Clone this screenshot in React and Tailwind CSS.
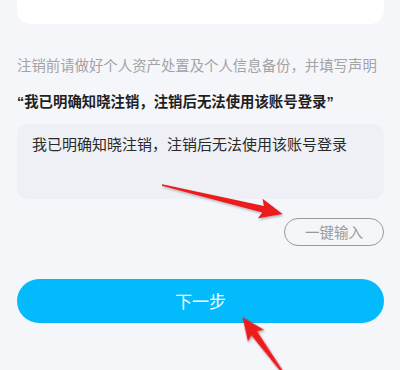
export default function App() {
  const arrow = (L) =>
    `0,-0.8 ${L - 20},-3.4 ${L - 23},-10 ${L},0 ${L - 23},10 ${L - 20},3.4 0,0.8`;
  return (
    <div
      className="relative w-[400px] h-[370px] overflow-hidden bg-[#f5f6fa] pl-[17px] pr-[16px]"
      style={{ fontFamily: '"Noto Sans CJK SC", "Noto Sans", sans-serif' }}
    >
      <div className="h-[24px] rounded-b-[14px] bg-white" />
      <p className="mt-[31px] text-[14.4px] leading-[20px] text-[#a3a3a6] whitespace-nowrap">
        注销前请做好个人资产处置及个人信息备份，并填写声明
      </p>
      <p className="mt-[16px] text-[14.4px] leading-[20px] font-bold text-[#1f1f1f] whitespace-nowrap">
        <span className="font-['Liberation_Sans']">“</span>
        我已明确知晓注销，注销后无法使用该账号登录
        <span className="font-['Liberation_Sans']">”</span>
      </p>
      <div className="mt-[12px] h-[75px] rounded-[10px] bg-[#eef0f5] pl-[15px] pt-[10px]">
        <p className="text-[15px] leading-[20px] text-[#2a2a2a] whitespace-nowrap">
          我已明确知晓注销，注销后无法使用该账号登录
        </p>
      </div>
      <div className="mt-[19px] flex justify-end">
        <div className="w-[100px] h-[28px] rounded-full border border-[#9a9a9a] flex items-center justify-center text-[14.5px] text-[#9a9a9a]">
          一键输入
        </div>
      </div>
      <div className="mt-[33px] h-[44px] rounded-full bg-[#03bbfc] flex items-center justify-center text-[17px] text-white">
        下一步
      </div>
      <svg
        className="absolute inset-0 pointer-events-none"
        width="400"
        height="370"
        viewBox="0 0 400 370"
      >
        <defs>
          <filter id="sh" x="-20%" y="-50%" width="140%" height="200%">
            <feDropShadow dx="1" dy="1.5" stdDeviation="1.2" floodColor="#000" floodOpacity="0.3" />
          </filter>
        </defs>
        <g filter="url(#sh)" fill="#ea1a1f">
          <polygon points={arrow(124)} transform="translate(162 185) rotate(13.5)" />
          <polygon points={arrow(74)} transform="translate(286 377) rotate(-126)" />
        </g>
      </svg>
    </div>
  );
}
